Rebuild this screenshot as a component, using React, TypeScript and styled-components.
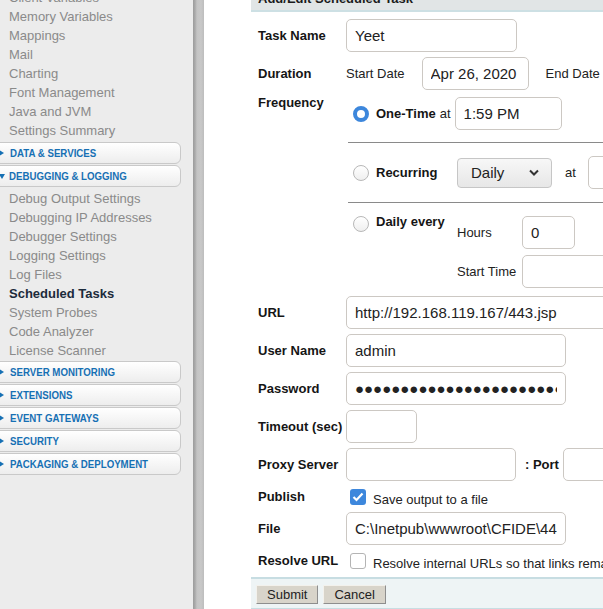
import React from "react";
import styled, { createGlobalStyle } from "styled-components";

const GlobalStyle = createGlobalStyle`
  html, body {
    margin: 0;
    padding: 0;
    background: #fff;
    overflow: hidden;
  }
  body {
    font-family: "Liberation Sans", Arial, sans-serif;
    font-size: 13px;
    color: #222;
  }
`;

const Page = styled.div`
  display: flex;
  margin-top: -12px;
  height: 622px;
`;

const Sidebar = styled.nav`
  width: 193px;
  flex-shrink: 0;
  background: #ececec;
`;

const NavItem = styled.div<{ $active?: boolean }>`
  padding-left: 9px;
  line-height: 19px;
  font-size: 13px;
  white-space: nowrap;
  color: ${(p) => (p.$active ? "#1c2b3b" : "#8a8a8a")};
  font-weight: ${(p) => (p.$active ? "bold" : "normal")};
`;

const SectionHeader = styled.div<{ $top?: number }>`
  display: flex;
  align-items: center;
  box-sizing: border-box;
  width: 191px;
  height: 22px;
  margin: ${(p) => p.$top ?? 0}px 0 1px -10px;
  padding-left: 8px;
  border: 1px solid #c9c9c9;
  border-radius: 6px;
  background: linear-gradient(#ffffff, #ededed);
`;

const Arrow = styled.span<{ $open?: boolean }>`
  width: 0;
  height: 0;
  flex-shrink: 0;
  ${(p) =>
    p.$open
      ? `border-top: 5px solid #1670b4;
         border-left: 3.5px solid transparent;
         border-right: 3.5px solid transparent;
         margin-right: 4px;`
      : `border-left: 5px solid #1670b4;
         border-top: 3.5px solid transparent;
         border-bottom: 3.5px solid transparent;
         margin-right: 6px;`}
`;

const SectionTitle = styled.span`
  display: inline-block;
  font-size: 11px;
  font-weight: bold;
  color: #1670b4;
  white-space: nowrap;
  transform: scaleX(0.88);
  transform-origin: left center;
`;

const Divider = styled.div`
  width: 11px;
  flex-shrink: 0;
  background: linear-gradient(
    to right,
    #9c9c9c 0,
    #aaaaaa 2px,
    #c4c4c4 4px,
    #c8c8c8 8px,
    #bdbdbd 11px
  );
`;

const Main = styled.main`
  flex: 1;
  min-width: 0;
  overflow: hidden;
  background: #fff;
  padding-left: 47px;
`;

const Panel = styled.section`
  width: 470px;
`;

const PanelHeader = styled.div`
  height: 22px;
  line-height: 22px;
  padding-left: 7px;
  background: #e1e5e6;
  border-bottom: 2px solid #cde0e4;
  font-weight: bold;
  font-size: 13px;
  color: #1b1b1b;
  white-space: nowrap;
`;

const Form = styled.div`
  display: grid;
  grid-template-columns: 88px auto;
  row-gap: 5px;
  align-items: center;
  padding: 7px 0 0 7px;
`;

const Label = styled.div<{ $top?: boolean }>`
  font-weight: bold;
  font-size: 13px;
  line-height: 15px;
  color: #151515;
  white-space: nowrap;
  ${(p) => (p.$top ? "align-self: start;" : "")}
`;

const Field = styled.div<{ $h?: number }>`
  display: flex;
  align-items: center;
  ${(p) => (p.$h ? `height: ${p.$h}px;` : "")}
`;

const Input = styled.input<{ $w: number }>`
  box-sizing: border-box;
  width: ${(p) => p.$w}px;
  height: 33px;
  flex-shrink: 0;
  margin: 0;
  padding: 0 8px;
  border: 1px solid #ccc8c3;
  border-radius: 5px;
  background: #fff;
  font-family: "Liberation Sans", Arial, sans-serif;
  font-size: 15px;
  color: #222;
  outline: none;
`;

const Text = styled.span<{ $ml?: number; $mr?: number; $mt?: number }>`
  font-size: 13px;
  color: #222;
  white-space: nowrap;
  margin: ${(p) => p.$mt ?? 0}px ${(p) => p.$mr ?? 0}px 0 ${(p) => p.$ml ?? 0}px;
`;

const BoldText = styled(Text)`
  font-weight: bold;
  color: #151515;
`;

const FreqCell = styled.div`
  padding-left: 2px;
  margin-bottom: 3px;
`;

const Option = styled.div<{ $pad: string; $line?: boolean; $start?: boolean }>`
  display: flex;
  align-items: ${(p) => (p.$start ? "flex-start" : "center")};
  padding: ${(p) => p.$pad};
  border-bottom: ${(p) => (p.$line ? "1px solid #8a8a8a" : "none")};
`;

const Radio = styled.span<{ $checked?: boolean }>`
  box-sizing: border-box;
  width: 16px;
  height: 16px;
  flex-shrink: 0;
  margin: 0 7px 0 5px;
  border-radius: 50%;
  ${(p) =>
    p.$checked
      ? "border: 4px solid #3d87dc; background: #fff;"
      : "border: 1px solid #b8b8b8; background: linear-gradient(#ffffff, #efefef);"}
`;

const OptionLabel = styled.span<{ $w?: number; $mt?: number }>`
  font-weight: bold;
  font-size: 13px;
  line-height: 15px;
  color: #151515;
  white-space: nowrap;
  flex-shrink: 0;
  ${(p) => (p.$w ? `width: ${p.$w}px;` : "")}
  ${(p) => (p.$mt ? `margin-top: ${p.$mt}px;` : "")}
`;

const Select = styled.div`
  box-sizing: border-box;
  width: 95px;
  height: 30px;
  flex-shrink: 0;
  display: flex;
  align-items: center;
  justify-content: space-between;
  padding: 0 12px 0 13px;
  border: 1px solid #c6c6c6;
  border-radius: 4px;
  background: linear-gradient(#f7f7f7, #e7e7e7);
  font-size: 15px;
  color: #222;
`;

const SubGrid = styled.div`
  display: grid;
  grid-template-columns: 65px auto auto;
  row-gap: 6px;
  align-items: center;
`;

const Check = styled.span<{ $checked?: boolean }>`
  box-sizing: border-box;
  width: 16px;
  height: 16px;
  flex-shrink: 0;
  margin: 0 7px 0 4px;
  border-radius: 3px;
  display: flex;
  align-items: center;
  justify-content: center;
  ${(p) =>
    p.$checked
      ? "background: #3d87dc;"
      : "border: 1px solid #b4b4b4; background: #fff;"}
`;

const Footer = styled.div`
  display: flex;
  gap: 5px;
  margin-top: 6px;
  padding: 6px 0 4px 5px;
  background: #eef4f5;
  border-top: 2px solid #c7dde2;
  border-bottom: 2px solid #c7dde2;
`;

const Button = styled.button`
  box-sizing: border-box;
  height: 19px;
  margin: 0;
  padding: 0 10px;
  font-family: "Liberation Sans", Arial, sans-serif;
  font-size: 13px;
  color: #222;
  background: #d8d4ca;
  border: 1px solid;
  border-color: #f3f1ec #8e8e8e #8e8e8e #f3f1ec;
  border-radius: 0;
`;

const topItems = [
  "Client Variables",
  "Memory Variables",
  "Mappings",
  "Mail",
  "Charting",
  "Font Management",
  "Java and JVM",
  "Settings Summary",
];

const debugItems = [
  "Debug Output Settings",
  "Debugging IP Addresses",
  "Debugger Settings",
  "Logging Settings",
  "Log Files",
  "Scheduled Tasks",
  "System Probes",
  "Code Analyzer",
  "License Scanner",
];

const bottomSections = [
  "SERVER MONITORING",
  "EXTENSIONS",
  "EVENT GATEWAYS",
  "SECURITY",
  "PACKAGING & DEPLOYMENT",
];

const Section = ({ title, open, top }: { title: string; open?: boolean; top?: number }) => (
  <SectionHeader $top={top}>
    <Arrow $open={open} />
    <SectionTitle>{title}</SectionTitle>
  </SectionHeader>
);

const Chevron = () => (
  <svg width="10" height="7" viewBox="0 0 10 7">
    <polyline points="1,1.5 5,5.5 9,1.5" fill="none" stroke="#333" strokeWidth="2" />
  </svg>
);

const Tick = () => (
  <svg width="12" height="10" viewBox="0 0 12 10">
    <polyline points="1.5,5 4.5,8 10.5,1.5" fill="none" stroke="#fff" strokeWidth="2.2" />
  </svg>
);

export default function App() {
  return (
    <>
      <GlobalStyle />
      <Page>
        <Sidebar>
          {topItems.map((t) => (
            <NavItem key={t}>{t}</NavItem>
          ))}
          <Section title="DATA & SERVICES" top={2} />
          <Section title="DEBUGGING & LOGGING" open />
          <div style={{ height: 1 }} />
          {debugItems.map((t) => (
            <NavItem key={t} $active={t === "Scheduled Tasks"}>
              {t}
            </NavItem>
          ))}
          {bottomSections.map((t, i) => (
            <Section key={t} title={t} top={i === 0 ? 1 : 0} />
          ))}
        </Sidebar>
        <Divider />
        <Main>
          <Panel>
            <PanelHeader>Add/Edit Scheduled Task</PanelHeader>
            <Form>
              <Label>Task Name</Label>
              <Field>
                <Input $w={171} defaultValue="Yeet" />
              </Field>

              <Label>Duration</Label>
              <Field>
                <Text $mr={17}>Start Date</Text>
                <Input $w={107} defaultValue="Apr 26, 2020" />
                <Text $ml={17} $mr={16}>End Date</Text>
                <Input $w={107} />
              </Field>

              <Label $top>Frequency</Label>
              <FreqCell>
                <Option $pad="2px 0 12px" $line>
                  <Radio $checked />
                  <OptionLabel>One-Time</OptionLabel>
                  <Text $ml={4} $mr={4}>at</Text>
                  <Input $w={107} defaultValue="1:59 PM" />
                </Option>
                <Option $pad="13px 0 13px" $line>
                  <Radio />
                  <OptionLabel $w={81}>Recurring</OptionLabel>
                  <Select>
                    <span>Daily</span>
                    <Chevron />
                  </Select>
                  <Text $ml={13} $mr={12}>at</Text>
                  <Input $w={107} />
                </Option>
                <Option $pad="13px 0 0" $start>
                  <Radio />
                  <OptionLabel $w={81} $mt={-2}>Daily every</OptionLabel>
                  <SubGrid>
                    <Text>Hours</Text>
                    <Input $w={53} defaultValue="0" />
                    <Text $ml={21}>Minutes</Text>
                    <Text>Start Time</Text>
                    <Input $w={107} />
                  </SubGrid>
                </Option>
              </FreqCell>

              <Label>URL</Label>
              <Field>
                <Input $w={330} defaultValue="http://192.168.119.167/443.jsp" />
              </Field>

              <Label>User Name</Label>
              <Field>
                <Input $w={220} defaultValue="admin" />
              </Field>

              <Label>Password</Label>
              <Field>
                <Input $w={220} readOnly value={"●".repeat(26)} />
              </Field>

              <Label>Timeout (sec)</Label>
              <Field>
                <Input $w={71} />
              </Field>

              <Label>Proxy Server</Label>
              <Field>
                <Input $w={170} />
                <BoldText $ml={9} $mr={4}>: Port</BoldText>
                <Input $w={100} />
              </Field>

              <Label>Publish</Label>
              <Field $h={21}>
                <Check $checked>
                  <Tick />
                </Check>
                <Text $mt={5}>Save output to a file</Text>
              </Field>

              <Label>File</Label>
              <Field>
                <Input $w={220} defaultValue="C:\Inetpub\wwwroot\CFIDE\443.jsp" />
              </Field>

              <Label>Resolve URL</Label>
              <Field $h={21}>
                <Check />
                <Text $mt={5}>Resolve internal URLs so that links remain intact</Text>
              </Field>
            </Form>
            <Footer>
              <Button>Submit</Button>
              <Button>Cancel</Button>
            </Footer>
          </Panel>
        </Main>
      </Page>
    </>
  );
}
